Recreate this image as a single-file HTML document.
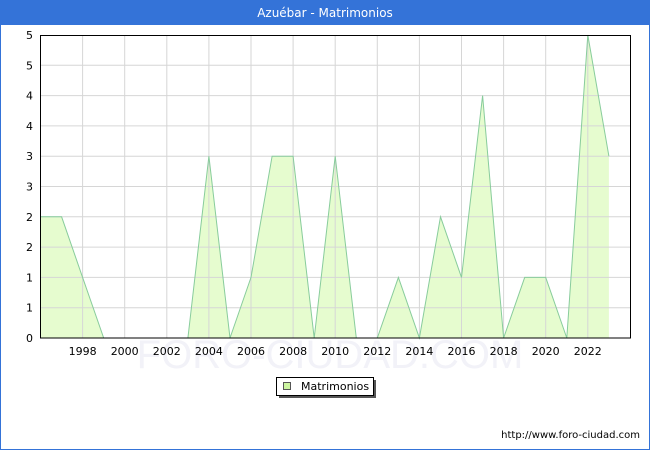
<!DOCTYPE html>
<html><head><meta charset="utf-8"><style>
html,body{margin:0;padding:0;background:#fff;}
body{width:650px;height:450px;overflow:hidden;}
svg{display:block;font-family:"DejaVu Sans","Liberation Sans",sans-serif;}
</style></head><body>
<svg width="650" height="450" viewBox="0 0 650 450">
<rect x="0.5" y="0.5" width="649" height="449" fill="#fff" stroke="#3473d8" stroke-width="1"/>
<rect x="0" y="0" width="650" height="25" fill="#3473d8"/>
<text x="325" y="17" text-anchor="middle" font-size="12" fill="#fff">Azuébar - Matrimonios</text>
<text x="330" y="368" text-anchor="middle" font-size="40" fill="#f2f2f8" font-family="Liberation Sans,sans-serif">FORO-CIUDAD.COM</text>
<polygon fill="#e6fccf" points="40.5,338 40.5,216.8 61.6,216.8 82.6,277.4 103.7,338 124.7,338 145.8,338 166.8,338 187.9,338 208.9,156.2 230,338 251,277.4 272.1,156.2 293.1,156.2 314.2,338 335.2,156.2 356.3,338 377.3,338 398.4,277.4 419.4,338 440.5,216.8 461.5,277.4 482.6,95.6 503.6,338 524.7,277.4 545.7,277.4 566.8,338 587.8,35 608.9,156.2 608.9,338"/>
<g stroke="#d6d6d6" stroke-width="1">
<line x1="40" y1="65.3" x2="630" y2="65.3"/><line x1="40" y1="95.6" x2="630" y2="95.6"/><line x1="40" y1="125.9" x2="630" y2="125.9"/><line x1="40" y1="156.2" x2="630" y2="156.2"/><line x1="40" y1="186.5" x2="630" y2="186.5"/><line x1="40" y1="216.8" x2="630" y2="216.8"/><line x1="40" y1="247.1" x2="630" y2="247.1"/><line x1="40" y1="277.4" x2="630" y2="277.4"/><line x1="40" y1="307.7" x2="630" y2="307.7"/>
<line x1="82.6" y1="35" x2="82.6" y2="338"/><line x1="124.7" y1="35" x2="124.7" y2="338"/><line x1="166.8" y1="35" x2="166.8" y2="338"/><line x1="208.9" y1="35" x2="208.9" y2="338"/><line x1="251" y1="35" x2="251" y2="338"/><line x1="293.1" y1="35" x2="293.1" y2="338"/><line x1="335.2" y1="35" x2="335.2" y2="338"/><line x1="377.3" y1="35" x2="377.3" y2="338"/><line x1="419.4" y1="35" x2="419.4" y2="338"/><line x1="461.5" y1="35" x2="461.5" y2="338"/><line x1="503.6" y1="35" x2="503.6" y2="338"/><line x1="545.7" y1="35" x2="545.7" y2="338"/><line x1="587.8" y1="35" x2="587.8" y2="338"/>
</g>
<polyline fill="none" stroke="#88cc9c" stroke-width="1" points="40.5,216.8 61.6,216.8 82.6,277.4 103.7,338 124.7,338 145.8,338 166.8,338 187.9,338 208.9,156.2 230,338 251,277.4 272.1,156.2 293.1,156.2 314.2,338 335.2,156.2 356.3,338 377.3,338 398.4,277.4 419.4,338 440.5,216.8 461.5,277.4 482.6,95.6 503.6,338 524.7,277.4 545.7,277.4 566.8,338 587.8,35 608.9,156.2"/>
<rect x="40.5" y="35.5" width="590" height="302.5" fill="none" stroke="#000" stroke-width="1"/>
<g font-size="11" fill="#000" text-anchor="end">
<text x="33" y="342">0</text><text x="33" y="311.7">1</text><text x="33" y="281.4">1</text><text x="33" y="251.1">2</text><text x="33" y="220.8">2</text><text x="33" y="190.5">3</text><text x="33" y="160.2">3</text><text x="33" y="129.9">4</text><text x="33" y="99.6">4</text><text x="33" y="69.3">5</text><text x="33" y="39">5</text>
</g>
<g font-size="11" fill="#000" text-anchor="middle">
<text x="82.6" y="355">1998</text><text x="124.7" y="355">2000</text><text x="166.8" y="355">2002</text><text x="208.9" y="355">2004</text><text x="251" y="355">2006</text><text x="293.1" y="355">2008</text><text x="335.2" y="355">2010</text><text x="377.3" y="355">2012</text><text x="419.4" y="355">2014</text><text x="461.5" y="355">2016</text><text x="503.6" y="355">2018</text><text x="545.7" y="355">2020</text><text x="587.8" y="355">2022</text>
</g>
<rect x="279" y="380" width="97" height="18" fill="#555"/>
<rect x="276.5" y="377.5" width="97" height="18" fill="#fff" stroke="#000" stroke-width="1"/>
<rect x="283.5" y="382.5" width="7" height="7" fill="#ccf5a0" stroke="#555" stroke-width="1"/>
<text x="301" y="390" font-size="11" fill="#000">Matrimonios</text>
<text x="640" y="438" font-size="10" fill="#000" text-anchor="end">http://www.foro-ciudad.com</text>
</svg>
</body></html>
